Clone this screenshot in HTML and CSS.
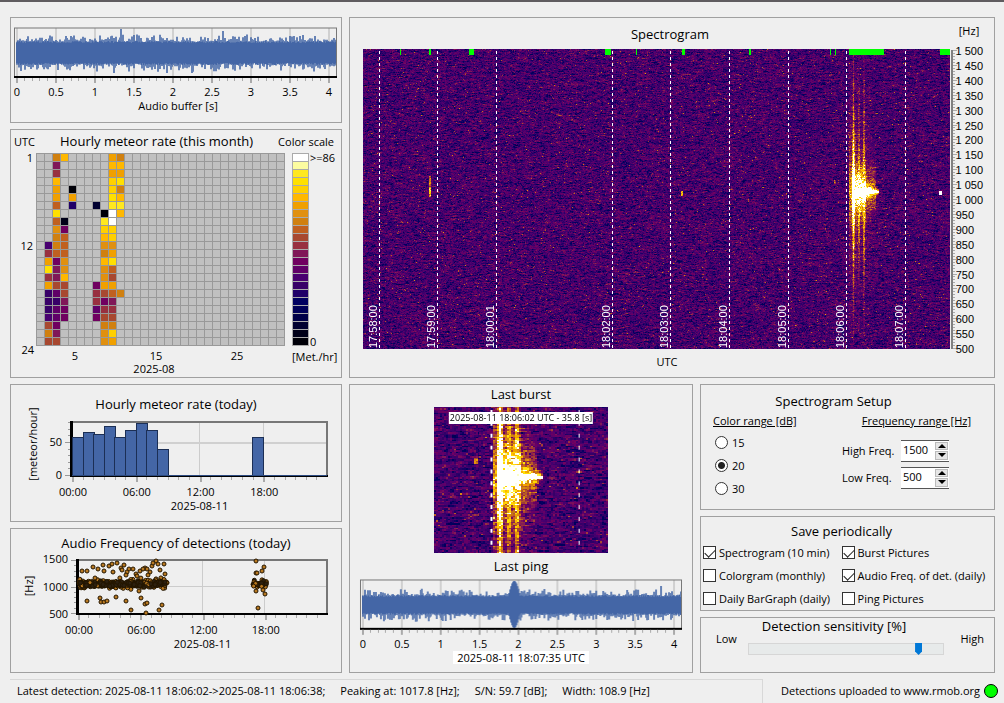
FILE: index.html
```html
<!DOCTYPE html>
<html lang="en">
<head>
  <meta charset="UTF-8" />
  <meta name="viewport" content="width=device-width, initial-scale=1.0" />
  <title>Meteor detection</title>
  <link rel="stylesheet" href="styles.css">
</head>
<body>
  <main>
    <div class="row top">
      <div class="column">
        <section class="panel">
          <svg id="bufferChart" class="chart" viewBox="0 0 330 104"></svg>
        </section>
        <section class="panel">
          <div class="month-head">
            <span class="utc">UTC</span>
            <h2>Hourly meteor rate (this month)</h2>
            <span class="scale-label">Color scale</span>
          </div>
          <svg id="monthChart" class="chart" viewBox="0 0 330 223"></svg>
        </section>
      </div>

      <section class="panel spectrogram">
        <div class="spec-head">
          <h2 class="strong">Spectrogram</h2>
          <span class="unit">[Hz]</span>
        </div>
        <div class="spec-body">
          <div class="spec-plot">
            <canvas id="specCanvas" width="587" height="300"></canvas>
            <svg id="specOverlay" class="overlay" viewBox="0 0 587 300"></svg>
          </div>
          <svg id="specAxis" class="chart" viewBox="0 0 44 300"></svg>
        </div>
        <div class="spec-foot">UTC</div>
      </section>
    </div>

    <div class="row bottom">
      <div class="column">
        <section class="panel today">
          <h2>Hourly meteor rate (today)</h2>
          <svg id="todayChart" class="chart" viewBox="0 -3 330 108"></svg>
        </section>
        <section class="panel freq">
          <h2>Audio Frequency of detections (today)</h2>
          <svg id="freqChart" class="chart" viewBox="0 -2 330 120"></svg>
        </section>
      </div>

      <section class="panel last">
        <h2 class="strong">Last burst</h2>
        <div class="burst">
          <canvas id="burstCanvas" width="88" height="98"></canvas>
          <svg id="burstOverlay" class="overlay" viewBox="0 0 176 147"></svg>
          <span class="burst-label">2025-08-11 18:06:02 UTC - 35.8 [s]</span>
        </div>
        <h2 class="strong">Last ping</h2>
        <svg id="pingChart" class="chart" viewBox="0 -2 343 77"></svg>
        <span class="ping-label">2025-08-11 18:07:35 UTC</span>
      </section>

      <div class="column">
        <section class="panel setup">
          <h2 class="strong">Spectrogram Setup</h2>
          <div class="setup-body">
            <fieldset>
              <legend>Color range [dB]</legend>
              <label><input type="radio" name="range" value="15" /> 15</label>
              <label><input type="radio" name="range" value="20" checked /> 20</label>
              <label><input type="radio" name="range" value="30" /> 30</label>
            </fieldset>
            <fieldset class="freq-range">
              <legend>Frequency range [Hz]</legend>
              <div class="field">
                <label for="highFreq">High Freq.</label>
                <span class="spin">
                  <input type="number" id="highFreq" value="1500" step="50" />
                  <span class="arrows">
                    <button type="button" class="up" aria-label="Increase high frequency" onclick="highFreq.stepUp()"></button>
                    <button type="button" class="down" aria-label="Decrease high frequency" onclick="highFreq.stepDown()"></button>
                  </span>
                </span>
              </div>
              <div class="field">
                <label for="lowFreq">Low Freq.</label>
                <span class="spin">
                  <input type="number" id="lowFreq" value="500" step="50" />
                  <span class="arrows">
                    <button type="button" class="up" aria-label="Increase low frequency" onclick="lowFreq.stepUp()"></button>
                    <button type="button" class="down" aria-label="Decrease low frequency" onclick="lowFreq.stepDown()"></button>
                  </span>
                </span>
              </div>
            </fieldset>
          </div>
        </section>

        <section class="panel save">
          <h2 class="strong">Save periodically</h2>
          <div class="checks">
            <label><input type="checkbox" checked /> Spectrogram (10 min)</label>
            <label><input type="checkbox" checked /> Burst Pictures</label>
            <label><input type="checkbox" /> Colorgram (monthly)</label>
            <label><input type="checkbox" checked /> Audio Freq. of det. (daily)</label>
            <label><input type="checkbox" /> Daily BarGraph (daily)</label>
            <label><input type="checkbox" /> Ping Pictures</label>
          </div>
        </section>

        <section class="panel sensitivity">
          <h2 class="strong"><label for="sens">Detection sensitivity [%]</label></h2>
          <div class="slider">
            <span>Low</span>
            <input type="range" id="sens" min="0" max="100" value="89" />
            <span>High</span>
          </div>
        </section>
      </div>
    </div>
  </main>

  <footer>
    <div class="status">
      <span>Latest detection: 2025-08-11 18:06:02-&gt;2025-08-11 18:06:38;</span>
      <span>Peaking at: 1017.8 [Hz];</span>
      <span>S/N: 59.7 [dB];</span>
      <span>Width: 108.9 [Hz]</span>
    </div>
    <div class="upload">
      <span>Detections uploaded to www.rmob.org</span>
      <span class="led"></span>
    </div>
  </footer>

  <script src="script.js"></script>
</body>
</html>
```

FILE: styles.css
```css
* {
  box-sizing: border-box;
}
body {
  margin: 0;
  min-height: 100vh;
  background: #efefef;
  color: #000;
  border-top: 2px solid #5f5c5f;
  font-family: "Open Sans", "Noto Sans", sans-serif;
  font-size: 11px;
  line-height: 16px;
  display: flex;
  flex-direction: column;
}
main {
  padding: 15px 9px 0 10px;
  display: flex;
  flex-direction: column;
  gap: 6px;
}
.row {
  display: grid;
  gap: 7px;
}
.top {
  grid-template-columns: 332fr 646fr;
}
.bottom {
  grid-template-columns: 332fr 344fr 295fr;
}
.column {
  display: flex;
  flex-direction: column;
  gap: 6px;
  min-width: 0;
}
.panel {
  border: 1px solid #a0a0a0;
  min-width: 0;
}
h2 {
  margin: 0;
  font-size: 13px;
  font-weight: 400;
  line-height: 18px;
  text-align: center;
}
h2.strong {
  font-weight: 500;
}
.chart {
  display: block;
  width: 100%;
  height: auto;
  overflow: visible;
}
.overlay {
  position: absolute;
  inset: 0;
  width: 100%;
  height: 100%;
}
canvas {
  display: block;
  width: 100%;
  image-rendering: pixelated;
}

/* chart parts */
.tick {
  font-size: 11px;
}
.hz {
  font-family: "Liberation Sans", Arial, sans-serif;
  font-size: 11px;
}
.time {
  font-family: "Liberation Sans", Arial, sans-serif;
  font-size: 11px;
  fill: #fff;
}
.middle {
  text-anchor: middle;
}
.end {
  text-anchor: end;
}
.wave {
  fill: #4466a6;
}

/* monthly colorgram */
.month-head {
  display: flex;
  justify-content: space-between;
  align-items: center;
  height: 24px;
  padding: 0 7px 0 3px;
}
.month-head h2 {
  padding-bottom: 3px;
}

/* spectrogram */
.spec-head {
  display: grid;
  grid-template-columns: 1fr 50px;
  height: 31px;
}
.spec-head h2 {
  padding: 7px 0 0 46px;
}
.unit {
  padding-top: 5px;
  text-align: center;
}
.spec-body {
  display: grid;
  grid-template-columns: 587fr 44fr;
  padding-left: 13px;
}
.spec-plot {
  position: relative;
}
.spec-foot {
  padding: 5px 10px 0 0;
  text-align: center;
}

.today {
  padding-top: 10px;
}
.freq {
  padding-top: 5px;
}

/* last burst and ping */
.last {
  display: flex;
  flex-direction: column;
  align-items: center;
}
.burst {
  position: relative;
  width: 51%;
  margin: 4px 0;
}
.burst canvas {
  aspect-ratio: 176 / 147;
}
.burst-label {
  position: absolute;
  top: 5px;
  left: 50%;
  transform: translateX(-50%);
  background: #fff;
  padding: 0 1px;
  font-size: 9px;
  line-height: 12px;
  white-space: nowrap;
}
.ping-label {
  background: #fff;
  padding: 0 4px;
  line-height: 13px;
}

/* setup */
.setup {
  min-height: 126px;
  padding: 7px 12px 0;
}
.setup h2 {
  padding-right: 28px;
}
.setup-body {
  display: flex;
  justify-content: space-between;
  padding-top: 1px;
}
fieldset {
  border: 0;
  margin: 0;
  padding: 0;
  min-width: 0;
}
legend {
  padding: 0;
  text-decoration: underline;
  line-height: 20px;
}
fieldset > label {
  display: flex;
  align-items: center;
  gap: 4px;
  height: 23px;
}
.freq-range {
  width: 140px;
  padding-right: 11px;
}
.freq-range legend {
  margin-left: auto;
  padding-bottom: 6px;
}
.field {
  display: flex;
  align-items: center;
  justify-content: space-between;
  width: 107px;
  height: 27px;
}
input[type="radio"],
input[type="checkbox"] {
  appearance: none;
  flex: none;
  width: 13px;
  height: 13px;
  margin: 0;
  border: 1px solid #333;
  background: #fff;
}
input[type="radio"] {
  margin-left: 2px;
  border-radius: 50%;
}
input[type="radio"]:checked {
  background: radial-gradient(circle, #222 0 3px, #fff 4px);
}
input[type="checkbox"]:checked::before {
  content: "";
  display: block;
  width: 9px;
  height: 5px;
  margin: 2px 1px;
  border: solid #222;
  border-width: 0 0 1px 1px;
  transform: rotate(-45deg);
}
.spin {
  display: flex;
  width: 48px;
  height: 22px;
  padding-right: 1px;
  background: #fff;
  border-top: 1px solid #555;
  border-bottom: 1px solid #555;
}
.spin input {
  flex: 1;
  min-width: 0;
  border: 0;
  padding: 0 0 2px 2px;
  background: none;
  font: inherit;
  color: inherit;
  appearance: textfield;
}
.spin input::-webkit-inner-spin-button {
  display: none;
}
.arrows {
  display: flex;
  flex-direction: column;
  gap: 1px;
  padding: 1px 0;
}
.arrows button {
  flex: 1;
  width: 13px;
  padding: 0;
  border: 1px solid #bbb;
  background: #e6e6e6;
  display: flex;
  align-items: center;
  justify-content: center;
}
.arrows button::before {
  content: "";
  border: solid transparent;
  border-width: 0 4px 4px;
  border-bottom-color: #000;
}
.arrows .down::before {
  border-width: 4px 4px 0;
  border-top-color: #000;
}

/* save options */
.save {
  min-height: 94px;
  padding: 5px 2px 0;
}
.save h2 {
  padding-right: 12px;
}
.checks {
  display: grid;
  grid-template-columns: 139fr 151fr;
  padding-top: 1px;
}
.checks label {
  display: flex;
  align-items: center;
  gap: 3px;
  height: 23px;
  white-space: nowrap;
}

/* sensitivity */
.sensitivity {
  flex: 1;
  padding: 0 10px 0 15px;
}
.sensitivity h2 {
  padding-right: 32px;
  line-height: 16px;
}
.slider {
  display: flex;
  justify-content: space-between;
}
.slider span {
  margin-top: -3px;
}
.slider input {
  appearance: none;
  width: 196px;
  height: 12px;
  margin: 9px 6px 0 0;
  background: #e7eaea;
  border: 1px solid #d6d6d6;
}
.slider input::-webkit-slider-thumb {
  appearance: none;
  width: 7px;
  height: 12px;
  background: #0078d7;
  clip-path: polygon(0 0, 100% 0, 100% 70%, 50% 100%, 0 70%);
}

footer {
  display: flex;
  flex: 1;
  margin-top: 6px;
  padding-left: 10px;
}
.status {
  display: flex;
  flex: 1;
  gap: 15px;
  padding: 3px 7px;
  border-top: 1px solid #d8d8d8;
  border-right: 1px solid #d8d8d8;
  white-space: nowrap;
}
.upload {
  display: flex;
  align-items: center;
  gap: 4px;
  padding: 0 6px 1px 18px;
}
.led {
  width: 14px;
  height: 14px;
  border: 1px solid #000;
  border-radius: 50%;
  background: #0f0;
}
```

FILE: script.js
```js
const SCALE = [
  "#ffffff", "#fcfca0", "#ffe820", "#ffe000", "#ffd000", "#ffb800", "#f0a000", "#e09010",
  "#d08010", "#c06020", "#a84830", "#983040", "#801858", "#700060", "#600068", "#480070",
  "#380068", "#200068", "#000060", "#000058", "#000048", "#000030", "#000018", "#000008"
];

let seed = 12345;
function rand() {
  seed = (seed * 1664525 + 1013904223) >>> 0;
  return seed / 4294967296;
}
function gauss() {
  return rand() + rand() + rand() + rand() - 2;
}

function add(parent, tag, attrs, text) {
  const el = document.createElementNS("http://www.w3.org/2000/svg", tag);
  for (const k in attrs) el.setAttribute(k, attrs[k]);
  if (text !== undefined) el.textContent = text;
  parent.appendChild(el);
  return el;
}
function rect(p, x, y, width, height, fill, extra) {
  return add(p, "rect", Object.assign({ x, y, width, height, fill }, extra));
}
function label(p, x, y, text, cls) {
  return add(p, "text", { x, y, class: cls || "tick middle" }, text);
}
function vlabel(p, x, y, text, cls) {
  return add(p, "text", { x, y, class: cls, transform: `rotate(-90 ${x} ${y})` }, text);
}

// ---- waveforms ----
function drawWave(id, x0, top, center, core, burst) {
  const svg = document.getElementById(id);
  const h = 49;
  for (let i = 0; i <= 8; i++) rect(svg, x0 + 1 + i * 39, top, 2, h, "#d0d0d0");
  let fringe = "", solid = "";
  for (let i = 0; i < 320; i++) {
    const x = x0 + 1 + i;
    let up = core + rand() * 2, down = core + rand() * 2;
    let su = up + Math.pow(rand(), 3) * 7, sd = down + Math.pow(rand(), 3) * 7;
    if (burst) {
      const b = 24 * Math.exp(-Math.pow((i - burst) / 5, 2) * 0.7);
      up = Math.max(up, b); down = Math.max(down, b - 1);
      su = Math.max(su, up); sd = Math.max(sd, down);
      if (i === 299) su = 19;
    } else if (i === 104 || i === 206) {
      su = i === 104 ? 24 : 22;
    } else if (i === 97 || i === 150 || i === 175) {
      sd = 20;
    }
    solid += `M${x} ${center - up}h1V${center + down}h-1z`;
    fringe += `M${x} ${center - su}h2V${center + sd}h-2z`;
  }
  add(svg, "path", { d: fringe, class: "wave", opacity: 0.8 });
  add(svg, "path", { d: solid, class: "wave" });
  rect(svg, x0 - 0.5, top, 322, h, "none", { stroke: "#777" });
  rect(svg, x0 - 1, top + h - 1, 323, 2, "#000");
  for (let i = 0; i <= 40; i++) {
    rect(svg, Math.round(x0 + 1 + i * 7.8), top + h + 1, i % 5 ? 1 : 2, i % 5 ? 3 : 5, "#aaa");
  }
  for (let i = 0; i <= 8; i++) label(svg, x0 + 2 + i * 39, top + h + 19, i / 2);
}
drawWave("bufferChart", 4, 10, 35, 10, 0);
label(document.getElementById("bufferChart"), 167, 92, "Audio buffer [s]");
drawWave("pingChart", 11, 3, 28, 8, 152);

// ---- monthly colorgram, one string per hour, days 2 to 11 ----
const MONTH = [
  ".if.....gi", ".m......ff", ".l......gg", ".f......ed", ".g.x....ei", ".g.g....df",
  ".j.r..v.cc", ".d.....xaf", ".jw....ca.", ".hn....ee.", ".ij....fe.", "pij....hh.",
  "ljj....ig.", "gnh....fd.", "dmh....hj.", "lmf....hk.", "gkk...ngg.", "qok...lkji",
  "qqm...lnm.", "qon...oll.", "pon...nkk.", "kn.....ii.", "im.....he.", "kk.....hg."
];
function drawMonth() {
  const svg = document.getElementById("monthChart");
  rect(svg, 25, 0, 249, 192, "#c0c0c0");
  for (let i = 0; i <= 31; i++) rect(svg, 25 + i * 8, 0, 1, 192, "#999");
  for (let i = 0; i <= 24; i++) rect(svg, 25, i * 8 - 1, 249, 1, "#999");
  MONTH.forEach((line, r) => {
    [...line].forEach((c, i) => {
      if (c !== ".") rect(svg, 34 + i * 8, r * 8, 7, 7, SCALE[c.charCodeAt(0) - 97]);
    });
  });
  rect(svg, 281, -1, 17, 193, "#aaa");
  SCALE.forEach((c, i) => rect(svg, 282, i * 8, 15, 7, c));
  label(svg, 22, 8, "1", "tick end");
  label(svg, 22, 96, "12", "tick end");
  label(svg, 23, 200, "24", "tick end");
  label(svg, 299, 8, ">=86", "tick");
  label(svg, 299, 192, "0", "tick");
  label(svg, 281, 207, "[Met./hr]", "tick");
  label(svg, 64, 206, "5");
  label(svg, 145, 206, "15");
  label(svg, 226, 206, "25");
  label(svg, 143, 219, "2025-08");
}
drawMonth();

// ---- charts over the hours of today ----
function frame(svg, x, w, h, dateY) {
  rect(svg, x, 6, w, h, "none", { stroke: "#777", "stroke-width": 2 });
  rect(svg, x - 2, 5, 3, h + 2, "#000");
  rect(svg, x - 2, h + 5, w + 3, 2, "#000");
  for (let i = 0; i < 24; i++) {
    rect(svg, Math.round(x + i * w / 24), h + 7, i % 6 ? 1 : 2, i % 6 ? 3 : 5, "#aaa");
  }
  ["00:00", "06:00", "12:00", "18:00"].forEach((t, i) => label(svg, x + 1 + i * w / 4, h + 26, t));
  label(svg, x + w / 2, dateY, "2025-08-11");
}
function drawToday() {
  const svg = document.getElementById("todayChart");
  const tops = { 0: 38, 1: 43, 2: 41, 3: 49, 4: 38, 5: 45, 6: 52, 7: 45, 8: 26, 17: 38 };
  rect(svg, 188, 6, 1, 54, "#ccc");
  rect(svg, 252, 6, 1, 54, "#ccc");
  rect(svg, 61, 26, 255, 2, "#d0d0d0");
  frame(svg, 61, 255, 54, 94);
  for (const i in tops) {
    rect(svg, 61.5 + Math.round(i * 10.6), 59.5 - tops[i], 11, tops[i], "#4466a6", { stroke: "#1c2f55" });
  }
  rect(svg, 61, 59, 255, 1, "#2c4a80");
  for (let i = 0; i < 9; i++) rect(svg, i % 5 ? 57 : 54, 59 - Math.round(i * 6.6), i % 5 ? 2 : 5, 1, "#999");
  label(svg, 51, 30, "50", "tick end");
  label(svg, 51, 63, "0", "tick end");
  vlabel(svg, 26, 28, "[meteor/hour]", "tick middle");
}
drawToday();

function drawFreq() {
  const svg = document.getElementById("freqChart");
  const dots = [
    [82, 570], [87, 570], [93, 566], [98, 568], [103, 564], [104, 570], [109, 565], [113, 571],
    [117, 562], [121, 567], [124, 564], [129, 568], [127, 571], [133, 568], [136, 573], [122, 569],
    [140, 570], [145, 567], [147, 568], [150, 571], [152, 565], [156, 560], [158, 563], [160, 569],
    [164, 563], [165, 573], [148, 574], [137, 575], [153, 562], [143, 568], [126, 574], [112, 563],
    [87, 600], [100, 597], [101, 601], [104, 601], [107, 600], [116, 596], [126, 600], [131, 609],
    [141, 597], [145, 603], [147, 602], [146, 612], [159, 609], [162, 604], [95, 577], [139, 590],
    [256, 560], [256, 572], [262, 570], [264, 566], [258, 607], [265, 593], [256, 590], [263, 589], [257, 572]
  ];
  rect(svg, 191, 6, 1, 54, "#ccc");
  rect(svg, 253, 6, 1, 54, "#ccc");
  rect(svg, 67, 32, 248, 1, "#ccc");
  frame(svg, 67, 249, 54, 94);
  function dot(x, y, fill) {
    add(svg, "circle", { cx: x, cy: y, r: 2, fill: fill || "#b87820", stroke: "#241600" });
  }
  for (let i = 0; i < 180; i++) dot(68 + rand() * 89, 30 + gauss() * 4);
  for (let i = 0; i < 260; i++) dot(69 + rand() * 85, 30 + gauss() * 2, rand() < 0.15 ? "" : "#2c2010");
  for (let i = 0; i < 40; i++) dot(242 + rand() * 14, 30 + gauss() * 3, rand() < 0.4 ? "" : "#2c2010");
  dots.forEach(d => dot(d[0] - 11, d[1] - 553));
  for (let i = 0; i < 11; i++) rect(svg, i % 5 ? 63 : 60, 6 + Math.round(i * 5.3), i % 5 ? 2 : 5, 1, "#999");
  label(svg, 57, 9, "1500", "tick end");
  label(svg, 57, 37, "1000", "tick end");
  label(svg, 57, 64, "500", "tick end");
  vlabel(svg, 22, 32, "[Hz]", "tick middle");
}
drawFreq();

// ---- spectrograms ----
const RGB = SCALE.map(c => [1, 3, 5].map(i => parseInt(c.substr(i, 2), 16))).reverse();
function color(v) {
  const f = Math.max(0, Math.min(0.999, v)) * 23;
  const i = Math.floor(f), t = f - i;
  return RGB[i].map((c, k) => c + (RGB[i + 1][k] - c) * t);
}

// echo strength at column x, dy rows from the carrier
function echo(x, dy) {
  const d = Math.abs(dy);
  let v = 0;
  if (x >= 486 && x <= 512) v = 0.5 * Math.exp(-d / (40 - (x - 486) * 1.1));
  if (x >= 489 && x <= 502) v = Math.max(v, 1.4 * Math.exp(-d / 17));
  if (x >= 489 && x <= 491) v = Math.max(v, 1.5 * Math.exp(-d / (x === 490 ? 54 : 32)));
  if (x >= 495 && x <= 496) v = Math.max(v, Math.exp(-d / 38));
  if (x >= 500 && x <= 501) v = Math.max(v, 0.9 * Math.exp(-d / 50));
  if (x > 502 && x <= 515) v = Math.max(v, 1.5 * Math.exp(-d / (1 + (515 - x) * 0.45)));
  return v;
}

function paint(id, signal) {
  const canvas = document.getElementById(id);
  const ctx = canvas.getContext("2d");
  const img = ctx.createImageData(canvas.width, canvas.height);
  let n = 0, p = 0;
  for (let y = 0; y < canvas.height; y++) {
    for (let x = 0; x < canvas.width; x++) {
      n = n * 0.45 + gauss() * 0.1;
      const tail = rand() < 0.03 ? rand() * 0.24 : 0;
      const s = signal(x, y);
      const v = 0.335 + n + tail + s * (0.55 + rand() * 0.65);
      const c = color(v);
      img.data[p++] = c[0];
      img.data[p++] = c[1];
      img.data[p++] = c[2];
      img.data[p++] = 255;
    }
  }
  ctx.putImageData(img, 0, 0);
}

paint("specCanvas", (x, y) => {
  if ((x === 66 || x === 67) && y > 126 && y < 148) return y > 137 ? 0.5 : 0.35;
  if (x >= 318 && x <= 319 && y > 141 && y < 147) return 0.45;
  if (x >= 471 && x <= 472 && y > 130 && y < 135) return 0.3;
  if (x >= 576 && x <= 578 && y > 141 && y < 146) return 1;
  if (x > 187 && x < 214 && Math.abs(y - 62 - (x - 187) * 0.4) < 1) return 0.12;
  return echo(x, y - 142);
});
paint("burstCanvas", (x, y) => {
  if (x > 19 && x < 22 && y > 33 && y < 38) return 0.3;
  return echo(Math.round(490 + (x - 33) * 1.2), (y - 46) * 1.07);
});

function drawOverlay() {
  const svg = document.getElementById("specOverlay");
  const times = [
    [16, "17:58:00"], [74, "17:59:00"], [133, "18:00:01"], [249, "18:02:00"], [307, "18:03:00"],
    [366, "18:04:00"], [425, "18:05:00"], [483, "18:06:00"], [542, "18:07:00"]
  ];
  times.forEach(([x, t]) => {
    add(svg, "line", { x1: x + 0.5, x2: x + 0.5, y1: 2, y2: 300, stroke: "#fff", "stroke-dasharray": "3 3" });
    vlabel(svg, x - 2, 299, t, "time");
  });
  const marks = [[37, 1], [66, 2], [106, 5], [242, 6], [273, 1], [319, 3], [386, 2], [467, 1], [472, 1], [486, 35], [577, 10]];
  marks.forEach(([x, w]) => rect(svg, x, 0, w, 6, "#00ff00"));

  const axis = document.getElementById("specAxis");
  rect(axis, 1, 1, 2, 299, "#808080");
  for (let i = 0; i <= 100; i++) rect(axis, 3, 1 + Math.round(i * 2.98), i % 5 ? 2 : 4, 1, "#aaa");
  for (let i = 0; i <= 20; i++) {
    const hz = String(1500 - i * 50).replace(/^1(\d{3})$/, "1 $1");
    label(axis, hz.length > 3 ? 33 : 24, 6 + Math.round(i * 14.9), hz, "hz end");
  }

  const burst = document.getElementById("burstOverlay");
  add(burst, "line", { x1: 58, x2: 58, y1: 3, y2: 147, stroke: "#fff", "stroke-width": 2, "stroke-dasharray": "4 8" });
  add(burst, "line", { x1: 146.5, x2: 146.5, y1: 3, y2: 147, stroke: "#fff", "stroke-dasharray": "4 8" });
}
drawOverlay();
```
